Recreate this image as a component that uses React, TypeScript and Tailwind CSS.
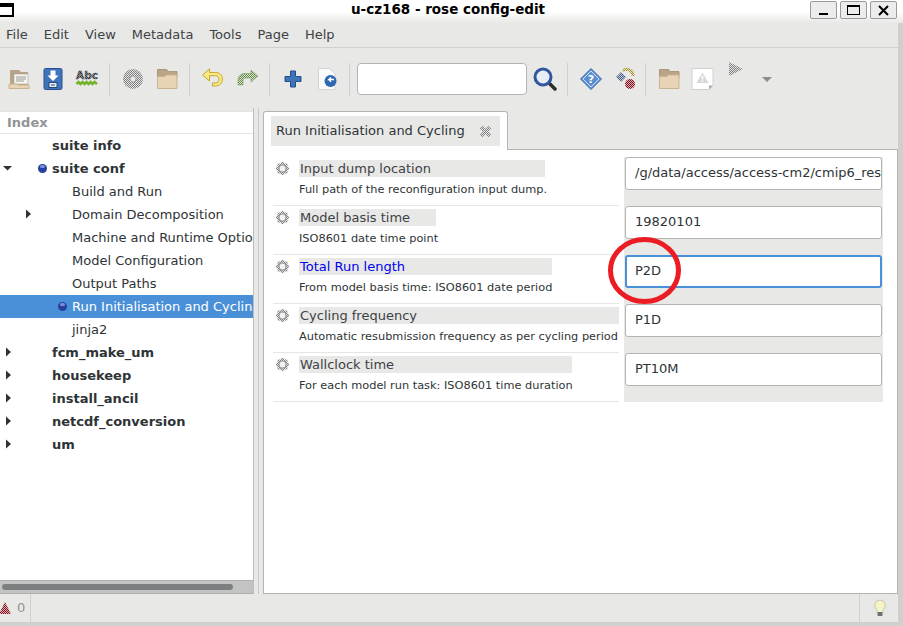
import { ReactNode } from "react";

const menus = ["File", "Edit", "View", "Metadata", "Tools", "Page", "Help"];

const tree = [
  { label: "suite info", bold: true, indent: 52 },
  { label: "suite conf", bold: true, indent: 52, arrow: "down", arrowX: 3, dot: 38 },
  { label: "Build and Run", indent: 72 },
  { label: "Domain Decomposition", indent: 72, arrow: "right", arrowX: 24 },
  { label: "Machine and Runtime Options", indent: 72 },
  { label: "Model Configuration", indent: 72 },
  { label: "Output Paths", indent: 72 },
  { label: "Run Initialisation and Cycling", indent: 72, dot: 58, selected: true },
  { label: "jinja2", indent: 72 },
  { label: "fcm_make_um", bold: true, indent: 52, arrow: "right", arrowX: 4 },
  { label: "housekeep", bold: true, indent: 52, arrow: "right", arrowX: 4 },
  { label: "install_ancil", bold: true, indent: 52, arrow: "right", arrowX: 4 },
  { label: "netcdf_conversion", bold: true, indent: 52, arrow: "right", arrowX: 4 },
  { label: "um", bold: true, indent: 52, arrow: "right", arrowX: 4 },
];

const rows = [
  { label: "Input dump location", desc: "Full path of the reconfiguration input dump.", value: "/g/data/access/access-cm2/cmip6_restarts/PI-02.astart", width: "w-[246px]" },
  { label: "Model basis time", desc: "ISO8601 date time point", value: "19820101", width: "w-[137px]" },
  { label: "Total Run length", desc: "From model basis time: ISO8601 date period", value: "P2D", width: "w-[253px]", changed: true },
  { label: "Cycling frequency", desc: "Automatic resubmission frequency as per cycling period", value: "P1D", width: "w-[320px]" },
  { label: "Wallclock time", desc: "For each model run task: ISO8601 time duration", value: "PT10M", width: "w-[273px]" },
];

function Slot({ children }: { children: ReactNode }) {
  return <div className="flex h-[24px] w-[34px] shrink-0 items-center justify-center">{children}</div>;
}

function Sep({ right = 6, left = 5 }: { right?: number; left?: number }) {
  return (
    <div
      className="h-[33px] w-px shrink-0 bg-[#d0d0ce]"
      style={{ marginLeft: left, marginRight: right }}
    />
  );
}

function Icon({ children }: { children: ReactNode }) {
  return (
    <svg width="24" height="24" viewBox="0 0 24 24">
      {children}
    </svg>
  );
}

function Folder() {
  return (
    <Icon>
      <path d="M2.500 2.500h9l2 2h8.500v6H2.500z" fill="#b9a487" stroke="#ab977b" />
      <path d="M2.500 21.500V9.500h7l2-1.500h10.500v13.500z" fill="#e8d3b5" stroke="#c9b492" />
    </Icon>
  );
}

function Sphere({ dotX }: { dotX: number }) {
  return (
    <span
      className="absolute top-[7px] h-[9px] w-[9px] rounded-full bg-[#27409c]"
      style={{ left: dotX }}
    >
      <span className="absolute left-[2px] top-[1px] h-[3px] w-[5px] rounded-full bg-[#7d8fd6]" />
    </span>
  );
}

function Arrow({ dir, x }: { dir: string; x: number }) {
  return (
    <svg className="absolute top-[6px]" style={{ left: x }} width="10" height="10" viewBox="0 0 10 10">
      {dir === "down" ? <path d="M0 3h9L4.500 7.500z" fill="#2e3436" /> : <path d="M2 0.500l5 4.500-5 4.500z" fill="#2e3436" />}
    </svg>
  );
}

function Gear() {
  return (
    <svg width="15" height="15" viewBox="0 0 15 15" className="shrink-0">
      <path
        d="M6 1h3l.5 2 2-1 1.500 1.500-1 2 2 .5v3l-2 .5 1 2L11.500 13l-2-1-.5 2H6l-.5-2-2 1L2 11.500l1-2-2-.5V6l2-.5-1-2L3.500 2l2 1z"
        fill="url(#hatch-grey)"
      />
      <circle cx="7.500" cy="7.500" r="3.500" fill="#f2f2f2" stroke="#9a9a98" strokeWidth="1.200" />
    </svg>
  );
}

export default function App() {
  return (
    <div className="relative flex h-[626px] w-[903px] flex-col overflow-hidden bg-[#e8e8e7] font-['DejaVu_Sans',sans-serif] text-[13px] text-[#2e3436]">
      <svg className="absolute h-0 w-0">
        <defs>
          <pattern id="hatch-grey" width="2" height="2" patternUnits="userSpaceOnUse">
            <rect width="2" height="2" fill="#e4e4e4" />
            <rect width="1" height="1" fill="#808080" />
            <rect x="1" y="1" width="1" height="1" fill="#808080" />
          </pattern>
          <pattern id="hatch-dark" width="2" height="2" patternUnits="userSpaceOnUse">
            <rect width="2" height="2" fill="#8f9294" />
            <rect width="1" height="1" fill="#2e3133" />
            <rect x="1" y="1" width="1" height="1" fill="#2e3133" />
          </pattern>
          <pattern id="hatch-green" width="2" height="2" patternUnits="userSpaceOnUse">
            <rect width="2" height="2" fill="#dfe6d6" />
            <rect width="1" height="1" fill="#5f8a42" />
            <rect x="1" y="1" width="1" height="1" fill="#5f8a42" />
          </pattern>
          <pattern id="hatch-red" width="2" height="2" patternUnits="userSpaceOnUse">
            <rect width="2" height="2" fill="#e0b0b0" />
            <rect width="1" height="1" fill="#7c1020" />
            <rect x="1" y="1" width="1" height="1" fill="#7c1020" />
          </pattern>
          <pattern id="hatch-blue" width="2" height="2" patternUnits="userSpaceOnUse">
            <rect width="2" height="2" fill="#c8d0dc" />
            <rect width="1" height="1" fill="#3f587c" />
            <rect x="1" y="1" width="1" height="1" fill="#3f587c" />
          </pattern>
          <pattern id="hatch-yellow" width="2" height="2" patternUnits="userSpaceOnUse">
            <rect width="2" height="2" fill="#ece6c0" />
            <rect width="1" height="1" fill="#9c8a30" />
            <rect x="1" y="1" width="1" height="1" fill="#9c8a30" />
          </pattern>
        </defs>
      </svg>

      {/* title bar */}
      <div className="relative flex h-[23px] shrink-0 items-center justify-center bg-gradient-to-b from-white from-50% to-[#e8e8e7] pb-[5px] pr-[7px] text-[13.5px] font-bold text-black">
        u-cz168 - rose config-edit
        <div className="absolute left-0 top-[3px] h-[14px] w-[14px] border-y-2 border-r-2 border-black border-t-[4px]" />
        <div className="absolute right-[6px] top-[1px] flex gap-[3px]">
          <div className="flex h-[18px] w-[27px] items-end justify-center rounded-[2px] border border-[#9a9a9a] bg-[#ececec] pb-[3px]">
            <div className="h-[2px] w-[9px] bg-black" />
          </div>
          <div className="flex h-[18px] w-[27px] items-center justify-center rounded-[2px] border border-[#9a9a9a] bg-[#ececec]">
            <div className="h-[10px] w-[13px] border border-t-2 border-black" />
          </div>
          <div className="flex h-[18px] w-[27px] items-center justify-center rounded-[2px] border border-[#9a9a9a] bg-[#ececec]">
            <svg width="11" height="11" viewBox="0 0 11 11">
              <path d="M1 1l9 9M10 1l-9 9" stroke="#000" strokeWidth="2" />
            </svg>
          </div>
        </div>
      </div>

      {/* everything below the title, with the grey window edge on the right */}
      <div className="flex min-h-0 flex-1 flex-col border-r-[5px] border-[#cfcfcf]">
        {/* menu */}
        <div className="flex h-[25px] shrink-0 items-center gap-[16px] border-b border-[#d0d0ce] pl-[6px] pb-[1px] text-[#3d4244]">
          {menus.map((m) => (
            <span key={m}>{m}</span>
          ))}
        </div>

        {/* toolbar */}
        <div className="flex h-[60px] shrink-0 items-center pl-[2px] pt-[2px]">
          <Slot>
            <Icon>
              <path d="M3 3h9l2 2h7v16H3z" fill="#b9a487" />
              <rect x="7" y="7" width="14" height="10" fill="#f5f5f0" stroke="#999" strokeWidth="0.500" />
              <path d="M9 10h10M9 12h10M9 14h8" stroke="#9a9a9a" />
              <path d="M2 17h8l1 1h11v3.500H2z" fill="#e8d3b5" stroke="#c9b492" />
            </Icon>
          </Slot>
          <Slot>
            <Icon>
              <rect x="3" y="1.500" width="18" height="21" rx="1.500" fill="#3f74bd" stroke="#28508e" />
              <path d="M9.500 3.500h5v5h3L12 14 6.500 8.500h3z" fill="#fff" />
              <rect x="8" y="15.500" width="8" height="5" fill="#e8eef6" stroke="#24477e" />
              <rect x="10" y="17.500" width="4" height="1" fill="#24477e" />
            </Icon>
          </Slot>
          <Slot>
            <Icon>
              <text x="12" y="12" textAnchor="middle" fontSize="10.500" fontWeight="bold" fill="url(#hatch-dark)" stroke="#3b3f41" strokeWidth="0.400" fontFamily="DejaVu Sans">
                Abc
              </text>
              <path d="M1.500 17l2-2 2 2 2-2 2 2 2-2 2 2 2-2 2 2 2-2 2.500 2" fill="none" stroke="#74b12c" strokeWidth="2.500" />
            </Icon>
          </Slot>
          <Sep />
          <Slot>
            <Icon>
              <circle cx="12" cy="12" r="10" fill="url(#hatch-grey)" />
              <circle cx="12" cy="12" r="3" fill="#e8e8e8" stroke="#8f8f8f" strokeWidth="0.700" />
            </Icon>
          </Slot>
          <Slot>
            <Folder />
          </Slot>
          <Sep />
          <Slot>
            <Icon>
              <path
                d="M1.500 8l7-6v3.500h6c4 0 7 2.500 7 6.500s-3 7-7 7h-3v-3h3c2 0 3.500-1.500 3.500-3.800s-1.500-3.500-3.500-3.500h-6V14z"
                fill="#f7e88a"
                stroke="#c9a824"
              />
            </Icon>
          </Slot>
          <Slot>
            <Icon>
              <path
                d="M23 9l-7-6v3.500h-6c-4 0-7 2.500-7 6.500v5h5v-4c0-2 1-3 3-3h5V15z"
                fill="url(#hatch-green)"
                stroke="#7d9a66"
                strokeWidth="0.600"
              />
            </Icon>
          </Slot>
          <Sep />
          <Slot>
            <Icon>
              <path d="M9.500 4h5v5.500H20v5h-5.500V20h-5v-5.500H4v-5h5.500z" fill="#3d75b8" stroke="#234f87" />
            </Icon>
          </Slot>
          <Slot>
            <Icon>
              <path d="M3.500 1.500h11l5.500 5v16H3.500z" fill="#fbfbfb" stroke="#d4d4d4" />
              <circle cx="15.500" cy="14" r="6" fill="#2f67b0" />
              <path d="M19 12.500h-5l2-2M14 12.500l2 2.200" fill="none" stroke="#fff" strokeWidth="1.500" />
            </Icon>
          </Slot>
          <Sep left={5} right={7} />
          <div className="h-[32px] w-[170px] shrink-0 rounded-[4px] border border-[#b4b4b1] bg-white" />
          <div className="w-px shrink-0" />
          <Slot>
            <Icon>
              <path d="M16 16l6 6" stroke="#2d2d2d" strokeWidth="3.500" strokeLinecap="round" />
              <circle cx="10" cy="10" r="8" fill="#e9eef6" stroke="#31589f" strokeWidth="3" />
            </Icon>
          </Slot>
          <Sep />
          <Slot>
            <Icon>
              <path d="M12 1.500L22.500 12 12 22.500 1.500 12z" fill="#5c8fd0" stroke="#3f6fb0" />
              <path d="M12 4l8 8-8 8-8-8z" fill="none" stroke="#cfe0f5" />
              <text x="12" y="16" textAnchor="middle" fontSize="11" fontWeight="bold" fill="#fff" fontFamily="DejaVu Sans">
                ?
              </text>
            </Icon>
          </Slot>
          <Slot>
            <Icon>
              <path d="M3 10l5-5 5 5-5 5z" fill="url(#hatch-blue)" />
              <path d="M10 4a6 6 0 0 1 10 5" fill="none" stroke="url(#hatch-yellow)" strokeWidth="3" />
              <circle cx="17" cy="17" r="5" fill="url(#hatch-red)" />
            </Icon>
          </Slot>
          <Sep left={3} />
          <Slot>
            <Folder />
          </Slot>
          <Slot>
            <Icon>
              <path d="M1 1.500h21v17l-4 4H1z" fill="#fff" stroke="#d0d0d0" />
              <path d="M11.500 5.500l6 10.500h-12z" fill="#d8d8d8" />
              <rect x="10.700" y="8.500" width="1.600" height="4" fill="#fff" />
              <rect x="10.700" y="13.500" width="1.600" height="1.500" fill="#fff" />
              <path d="M18 22.500v-4h4z" fill="#a9a9a9" />
            </Icon>
          </Slot>
          <Slot>
            <div className="mb-[16px] ml-[-3px]">
              <Icon>
                <path d="M5 3l14 7-14 7z" fill="url(#hatch-grey)" />
              </Icon>
            </div>
          </Slot>
          <svg width="10" height="6" viewBox="0 0 10 6" className="ml-[8px] mt-[1px]">
            <path d="M0 0h10L5 5z" fill="#8a8d8e" />
          </svg>
        </div>

        {/* panes */}
        <div className="flex min-h-0 flex-1">
          {/* index */}
          <div className="flex w-[254px] shrink-0 flex-col border-r border-[#bdbdbb] pt-[3px]">
            <div className="flex h-[23px] shrink-0 items-center border-y border-[#e3e3e1] bg-white pl-[7px] font-bold text-[#929595]">
              Index
            </div>
            <div className="min-h-0 flex-1 overflow-hidden bg-white">
              {tree.map((t) => (
                <div
                  key={t.label}
                  className={`relative flex h-[23px] items-center whitespace-nowrap ${t.selected ? "bg-[#4a90d9] text-white" : ""} ${t.bold ? "font-bold" : ""}`}
                  style={{ paddingLeft: t.indent }}
                >
                  {t.arrow && <Arrow dir={t.arrow} x={t.arrowX as number} />}
                  {t.dot !== undefined && <Sphere dotX={t.dot} />}
                  {t.label}
                </div>
              ))}
            </div>
            <div className="flex h-[14px] shrink-0 items-center border-y border-[#b0b1af] bg-[#c2c3c2] px-[2px]">
              <div className="h-[6px] w-[231px] rounded-[3px] bg-[#7b7f7f]" />
            </div>
          </div>

          {/* grip */}
          <div className="flex w-[9px] shrink-0 pl-[4px]">
            <div className="h-full w-px bg-[#c9c9c7]" />
          </div>

          {/* notebook */}
          <div className="flex min-w-0 flex-1 flex-col pt-[3px]">
            <div className="relative z-10 mb-[-1px] ml-0 flex h-[39px] w-[245px] shrink-0 rounded-t-[3px] border border-b-0 border-[#b4b4b1] bg-white pl-[7px] pt-[4px]">
              <div className="flex h-[30px] w-[229px] items-center justify-between bg-[#e8e8e7] pl-[5px] pr-[8px] text-[#2e3436]">
                <span>Run Initialisation and Cycling</span>
                <svg width="13" height="13" viewBox="0 0 13 13">
                  <path d="M2 2l9 9M11 2l-9 9" stroke="url(#hatch-grey)" strokeWidth="3.500" />
                </svg>
              </div>
            </div>
            <div className="min-h-0 flex-1 border border-[#b4b4b1] bg-white pl-[9px] pt-[7px]">
              {rows.map((r) => (
                <div key={r.label} className="flex h-[49px]">
                  <div className="h-[49px] w-[346px] shrink-0 border-b border-[#e6e6e4]">
                    <div className="mt-[3px] flex h-[17px] items-center gap-[9px] pl-[2px]">
                      <Gear />
                      <div className={`flex h-[17px] shrink-0 items-center bg-[#e8e8e7] pl-px ${r.width} ${r.changed ? "text-[#0000ee]" : "text-[#3d4244]"}`}>
                        {r.label}
                      </div>
                    </div>
                    <div className="mt-[4px] whitespace-nowrap pl-[26px] text-[11.33px] leading-[16px]">{r.desc}</div>
                  </div>
                  <div className="ml-[5px] flex w-[259px] shrink-0 flex-col bg-[#e8e8e7]">
                    <div
                      className={`mx-px flex h-[33px] shrink-0 items-center overflow-hidden whitespace-nowrap rounded-[3px] bg-white pb-[1px] pr-[1px] ${r.changed ? "border-2 border-[#4a90d9] pl-[8px]" : "border border-[#b4b4b1] pl-[9px]"}`}
                    >
                      {r.value}
                    </div>
                  </div>
                </div>
              ))}
            </div>
          </div>
        </div>

        {/* status bar */}
        <div className="flex h-[28px] shrink-0 items-center">
          <div className="flex h-full w-[31px] shrink-0 items-center gap-[6px] border-r border-[#d0d0ce] pb-[1px] text-[#929595]">
            <svg width="11" height="12" viewBox="0 0 11 12" className="shrink-0">
              <path d="M5 0l6 12H-1z" fill="url(#hatch-red)" />
            </svg>
            <span>0</span>
          </div>
          <div className="flex-1" />
          <div className="flex h-full w-[39px] shrink-0 items-center justify-center border-l border-[#d0d0ce] pl-[1px]">
            <svg width="14" height="18" viewBox="0 0 14 18">
              <path d="M7 1a5.500 5.500 0 0 0-3 10v3h6v-3a5.500 5.500 0 0 0-3-10z" fill="#f6f3c4" stroke="#c5c5bd" />
              <rect x="4.500" y="13" width="5" height="4" rx="1" fill="#6e6f6e" />
            </svg>
          </div>
        </div>
        <div className="-mr-[5px] h-[4px] shrink-0 bg-[#d0d0d0]" />
      </div>

      {/* red annotation ring */}
      <svg className="absolute left-[604px] top-[233px]" width="82" height="76" viewBox="0 0 82 76">
        <ellipse cx="40.500" cy="37.500" rx="34" ry="31" fill="none" stroke="#ec1c24" strokeWidth="5" />
      </svg>
    </div>
  );
}
